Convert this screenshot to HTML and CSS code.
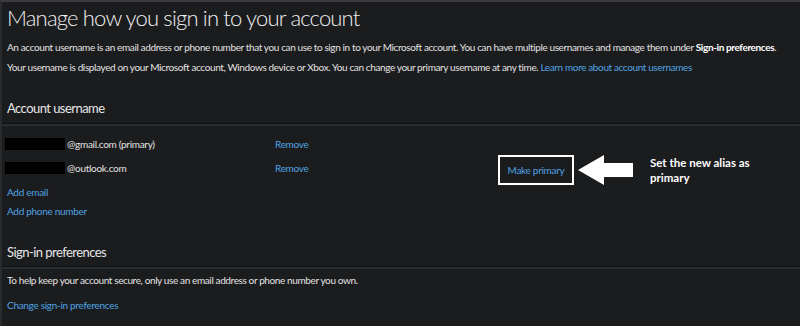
FILE: index.html
```html
<!DOCTYPE html>
<html>
<head>
<meta charset="utf-8">
<link rel="stylesheet" href="styles.css">
</head>
<body>
<div class="page">
  <h1 class="title">Manage how you sign in to your account</h1>
  <p class="para">An account username is an email address or phone number that you can use to sign in to your Microsoft account. You can have multiple usernames and manage them under <b>Sign-in preferences</b>.</p>
  <p class="para p2">Your username is displayed on your Microsoft account, Windows device or Xbox. You can change your primary username at any time. <a class="link">Learn more about account usernames</a></p>

  <h2 class="section">Account username</h2>
  <div class="divider"></div>
  <div class="rows">
    <div class="row">
      <span class="email"><span class="redact"></span>@gmail.com (primary)</span>
      <a class="link">Remove</a>
    </div>
    <div class="row r2">
      <span class="email"><span class="redact"></span>@outlook.com</span>
      <a class="link">Remove</a>
      <div class="callout">
        <div class="mp-box"><a class="link">Make primary</a></div>
        <svg class="arrow" width="56" height="32" viewBox="0 0 56 32"><polygon points="0,16 26,1 26,9 55,9 55,23 26,23 26,31" fill="#fff"/></svg>
        <div class="note">Set the new alias as<br>primary</div>
      </div>
    </div>
    <a class="link add a1">Add email</a>
    <a class="link add a2">Add phone number</a>
  </div>

  <h2 class="section s2">Sign-in preferences</h2>
  <div class="divider d2"></div>
  <p class="para p3">To help keep your account secure, only use an email address or phone number you own.</p>
  <a class="link change">Change sign-in preferences</a>
</div>
</body>
</html>
```

FILE: styles.css
```css
html, body {
  margin: 0;
  padding: 0;
  background: #1b1c1e;
  height: 100%;
  overflow: hidden;
}
body {
  font-family: "Lato", "Open Sans", sans-serif;
  color: #e2e2e2;
  border-top: 2px solid #3c3c3e;
  border-left: 2px solid #2a2b2d;
  box-sizing: border-box;
}
.page {
  display: flex;
  flex-direction: column;
  align-items: flex-start;
  padding-left: 5px;
}
.title {
  margin: 0;
  font-weight: 300;
  font-size: 22px;
  line-height: 32px;
  letter-spacing: -0.82px;
  color: #f0f0f0;
  white-space: nowrap;
}
.para {
  margin: 0;
  font-size: 10px;
  letter-spacing: -0.38px;
  line-height: 14px;
  margin-top: 6px;
  white-space: nowrap;
}
.para b { font-weight: 700; color: #fff; }
.p2 { margin-top: 6px; }
.link {
  color: #4fa3e3;
  text-decoration: none;
}
.section {
  margin: 0;
  font-weight: 400;
  font-size: 13px;
  letter-spacing: -0.55px;
  line-height: 20px;
  color: #e6e6e6;
  margin-top: 24px;
}
.divider {
  align-self: stretch;
  margin-left: -7px;
  margin-top: 5px;
  height: 1px;
  background: #0f1011;
  border-bottom: 2px solid #2c2d2f;
}
.rows {
  display: flex;
  flex-direction: column;
  align-items: flex-start;
  font-size: 10px;
  letter-spacing: -0.3px;
  margin-top: 11px;
}
.row {
  position: relative;
  display: flex;
  align-items: center;
  line-height: 14px;
}
.r2 { margin-top: 10px; }
.email {
  display: flex;
  align-items: center;
  width: 270px;
  margin-left: -2px;
}
.redact {
  display: inline-block;
  width: 60px;
  height: 12px;
  background: #000;
  margin-right: 2px;
}
.add { line-height: 14px; }
.a1 { margin-top: 10px; }
.a2 { margin-top: 5px; }
.callout {
  position: absolute;
  left: 491px;
  top: -7px;
  display: flex;
  align-items: center;
  white-space: nowrap;
  letter-spacing: normal;
}
.mp-box {
  box-sizing: border-box;
  width: 76px;
  height: 30px;
  border: 2px solid #fff;
  display: flex;
  align-items: center;
  justify-content: center;
  letter-spacing: -0.3px;
}
.arrow { margin-left: 4px; }
.note {
  margin-left: 16px;
  font-weight: 700;
  font-size: 11.5px;
  line-height: 15px;
  color: #fff;
}
.s2 { margin-top: 24px; }
.d2 { margin-top: 4px; }
.p3 { margin-top: 4px; }
.change {
  font-size: 10px;
  letter-spacing: -0.3px;
  line-height: 14px;
  margin-top: 11px;
}
```
